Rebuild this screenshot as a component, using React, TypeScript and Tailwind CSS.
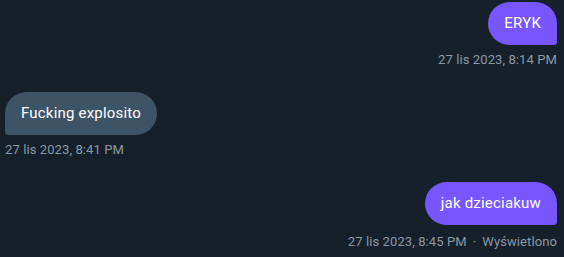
const messages = [
  { id: 1, text: "ERYK", time: "27 lis 2023, 8:14 PM", mine: true },
  { id: 2, text: "Fucking explosito", time: "27 lis 2023, 8:41 PM", mine: false },
  { id: 3, text: "jak dzieciakuw", time: "27 lis 2023, 8:45 PM", mine: true, seen: true },
];

export default function App() {
  return (
    <div
      className="min-h-screen w-full bg-[#15202b] pl-[5px] pr-[7px] pt-[2px]"
      style={{ fontFamily: "Roboto, 'Liberation Sans', sans-serif" }}
    >
      <div className="flex flex-col gap-[24px]">
        {messages.map((m) => (
          <div key={m.id} className={m.mine ? "flex flex-col items-end" : "flex flex-col items-start"}>
            <div
              className={
                m.mine
                  ? "rounded-[24px] rounded-br-[4px] bg-[#7856ff] px-4 py-[11px] text-[15px] leading-[21px] tracking-[0.2px] text-white"
                  : "rounded-[24px] rounded-bl-[4px] bg-[#3d5466] px-4 py-[11px] text-[15px] leading-[21px] tracking-[0.2px] text-white"
              }
            >
              {m.text}
            </div>
            <div
              className={
                m.seen
                  ? "mt-[9px] text-[13px] leading-4 tracking-[0.1px] text-[#8b98a5]"
                  : "mt-[7px] text-[13px] leading-4 tracking-[0.1px] text-[#8b98a5]"
              }
            >
              {m.time}
              {m.seen && (
                <>
                  <span className="mx-[6px]">·</span>
                  <span>Wyświetlono</span>
                </>
              )}
            </div>
          </div>
        ))}
      </div>
    </div>
  );
}
